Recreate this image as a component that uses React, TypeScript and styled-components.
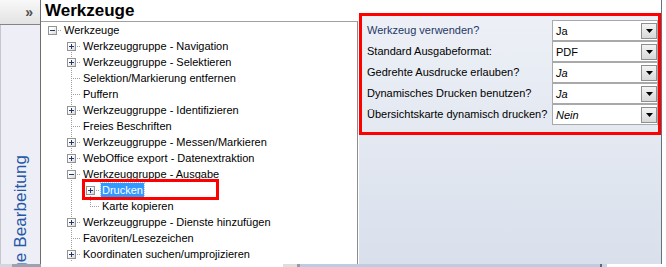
import React from 'react';
import styled, { createGlobalStyle, css } from 'styled-components';

const GlobalStyle = createGlobalStyle`
  html, body {
    margin: 0;
    padding: 0;
    background: #ffffff;
  }
  body {
    width: 666px;
    height: 267px;
    overflow: hidden;
    font-family: "Liberation Sans", Arial, sans-serif;
  }
`;

type Vert = 'none' | 'first' | 'mid' | 'last' | 'pipe';
type Joint = { v: Vert; h: boolean; box?: 'plus' | 'minus' };
type TreeRow = { label: string; cols: Joint[]; selected?: boolean; marked?: boolean };

const J = (v: Vert, box?: 'plus' | 'minus'): Joint => ({ v, h: true, box });
const P: Joint = { v: 'pipe', h: false };
const B: Joint = { v: 'none', h: false };

const treeRows: TreeRow[] = [
  { label: 'Werkzeuge', cols: [J('none', 'minus')] },
  { label: 'Werkzeuggruppe - Navigation', cols: [B, J('first', 'plus')] },
  { label: 'Werkzeuggruppe - Selektieren', cols: [B, J('mid', 'plus')] },
  { label: 'Selektion/Markierung entfernen', cols: [B, J('mid')] },
  { label: 'Puffern', cols: [B, J('mid')] },
  { label: 'Werkzeuggruppe - Identifizieren', cols: [B, J('mid', 'plus')] },
  { label: 'Freies Beschriften', cols: [B, J('mid')] },
  { label: 'Werkzeuggruppe - Messen/Markieren', cols: [B, J('mid', 'plus')] },
  { label: 'WebOffice export - Datenextraktion', cols: [B, J('mid', 'plus')] },
  { label: 'Werkzeuggruppe - Ausgabe', cols: [B, J('mid', 'minus')] },
  { label: 'Drucken', cols: [B, P, J('first', 'plus')], selected: true, marked: true },
  { label: 'Karte kopieren', cols: [B, P, J('last')] },
  { label: 'Werkzeuggruppe - Dienste hinzufügen', cols: [B, J('mid', 'plus')] },
  { label: 'Favoriten/Lesezeichen', cols: [B, J('mid')] },
  { label: 'Koordinaten suchen/umprojizieren', cols: [B, J('mid', 'plus')] },
];

const settings = [
  { label: 'Werkzeug verwenden?', value: 'Ja', italic: false, accent: true },
  { label: 'Standard Ausgabeformat:', value: 'PDF', italic: false, accent: false },
  { label: 'Gedrehte Ausdrucke erlauben?', value: 'Ja', italic: true, accent: false },
  { label: 'Dynamisches Drucken benutzen?', value: 'Ja', italic: true, accent: false },
  { label: 'Übersichtskarte dynamisch drucken?', value: 'Nein', italic: true, accent: false },
];

const strip: [number, string][] = [
  [12, '#d3d7df'],
  [29, '#9aa3b2'],
  [242, '#ffffff'],
  [14, '#dedede'],
  [3, '#9c9c9c'],
  [300, '#bccde3'],
  [2, '#5f6b7a'],
  [5, '#c6d6ea'],
  [59, '#ffffff'],
];

const Screen = styled.div`
  width: 666px;
  height: 267px;
  display: flex;
  flex-direction: column;
  overflow: hidden;
`;

const Main = styled.div`
  display: flex;
  height: 264px;
`;

const Sidebar = styled.div`
  width: 41px;
  flex: none;
  display: flex;
  flex-direction: column;
  border-right: 1px solid #6e6e6e;
  box-sizing: border-box;
`;

const SidebarTop = styled.div`
  height: 25px;
  box-sizing: border-box;
  border-bottom: 1px solid #858585;
  background: linear-gradient(#f8f8f8, #e3e3e3);
  display: flex;
  align-items: center;
  justify-content: flex-end;
  padding: 0 7px 1px 0;
  color: #4e4e4e;
  font-size: 14px;
  font-weight: bold;
`;

const SidebarBody = styled.div`
  flex: 1;
  min-height: 0;
  background: #eeeef6;
  border-left: 1px solid #c6c6ce;
  overflow: hidden;
  padding-top: 130px;
  display: flex;
  align-items: flex-start;
  justify-content: center;
`;

const VerticalTitle = styled.div`
  flex: none;
  writing-mode: vertical-rl;
  transform: rotate(180deg);
  font-size: 17px;
  line-height: 18px;
  letter-spacing: 0.1px;
  color: #2457a6;
  white-space: nowrap;
`;

const LeftColumn = styled.div`
  width: 317px;
  flex: none;
  display: flex;
  flex-direction: column;
`;

const Title = styled.div`
  height: 21px;
  line-height: 21px;
  padding-left: 4px;
  font-size: 17px;
  font-weight: bold;
  color: #000;
`;

const Tree = styled.div`
  flex: 1;
  border-top: 1px solid #a0a0a0;
  border-right: 1px solid #8d8d8d;
  padding-left: 3px;
  overflow: hidden;
`;

const Row = styled.div`
  height: 16px;
  display: flex;
  align-items: center;
`;

const Marked = styled.div`
  position: relative;
  display: flex;
  align-items: center;
  width: 137px;
  height: 16px;
  &::after {
    content: '';
    position: absolute;
    left: 0;
    right: 0;
    top: -3px;
    bottom: -2px;
    border: 3px solid #ff0000;
  }
`;

const dotsV = 'repeating-linear-gradient(to bottom, #a0a0a0 0 1px, transparent 1px 2px)';
const dotsH = 'repeating-linear-gradient(to right, #a0a0a0 0 1px, transparent 1px 2px)';

const jointBg = (v: Vert, h: boolean) => {
  const layers: string[] = [];
  if (v === 'mid' || v === 'pipe') layers.push(`${dotsV} 8px 0 / 1px 16px no-repeat`);
  if (v === 'first') layers.push(`${dotsV} 8px 8px / 1px 8px no-repeat`);
  if (v === 'last') layers.push(`${dotsV} 8px 0 / 1px 9px no-repeat`);
  if (h) layers.push(`${dotsH} 8px 8px / 10px 1px no-repeat`);
  return layers.length ? layers.join(', ') : 'none';
};

const JointCell = styled.div<{ $v: Vert; $h: boolean }>`
  width: 19px;
  height: 16px;
  flex: none;
  display: flex;
  align-items: center;
  padding-left: 4px;
  box-sizing: border-box;
  ${(p) => css`
    background: ${jointBg(p.$v, p.$h)};
  `}
`;

const ExpandBox = styled.span`
  width: 9px;
  height: 9px;
  box-sizing: border-box;
  border: 1px solid #939393;
  background: linear-gradient(135deg, #ffffff 30%, #d6d6d6);
  display: flex;
  margin-top: 1px;
`;

const Label = styled.span<{ $selected?: boolean }>`
  font-size: 11px;
  line-height: 14px;
  padding: 0 1px;
  white-space: nowrap;
  color: ${(p) => (p.$selected ? '#ffffff' : '#000000')};
  background: ${(p) => (p.$selected ? '#3399ff' : 'transparent')};
  outline: ${(p) => (p.$selected ? '1px dotted #9fcaff' : 'none')};
`;

const RightColumn = styled.div`
  width: 304px;
  flex: none;
  box-sizing: border-box;
  border-right: 1px solid #66707e;
  padding: 13px 0 0 1px;
  display: flex;
  flex-direction: column;
`;

const Panel = styled.div`
  flex: 1;
  background: linear-gradient(#edf0f6, #d9e0ec);
`;

const RedFrame = styled.div`
  border: 3px solid #ff0000;
  padding: 4px 0 7px 5px;
  display: grid;
  grid-template-columns: 1fr 106px;
  grid-auto-rows: 21px;
`;

const SettingLabel = styled.div<{ $accent: boolean }>`
  font-size: 11px;
  line-height: 21px;
  white-space: nowrap;
  color: ${(p) => (p.$accent ? '#1f3766' : '#000000')};
`;

const Combo = styled.div`
  box-sizing: border-box;
  border: 1px solid #a9a9a9;
  background: #ffffff;
  display: flex;
  align-items: center;
  padding-left: 3px;
`;

const ComboValue = styled.span<{ $italic: boolean }>`
  flex: 1;
  font-size: 11px;
  font-style: ${(p) => (p.$italic ? 'italic' : 'normal')};
  color: #000;
`;

const ComboButton = styled.span`
  width: 16px;
  height: 16px;
  box-sizing: border-box;
  border: 1px solid #8f8f8f;
  background: linear-gradient(#f4f4f4, #d8d8d8);
  display: flex;
  align-items: center;
  justify-content: center;
`;

const Filler = styled.div`
  flex: 1;
  background: #ffffff;
`;

const Strip = styled.div`
  display: flex;
  height: 3px;
`;

const StripPart = styled.div<{ $w: number; $c: string }>`
  width: ${(p) => p.$w}px;
  background: ${(p) => p.$c};
`;

const Sign = ({ kind }: { kind: 'plus' | 'minus' }) => (
  <svg width="7" height="7" viewBox="0 0 7 7">
    <path d="M1 3.5h5" stroke="#23386b" strokeWidth="1" />
    {kind === 'plus' && <path d="M3.5 1v5" stroke="#23386b" strokeWidth="1" />}
  </svg>
);

const Arrow = () => (
  <svg width="7" height="4" viewBox="0 0 7 4">
    <path d="M0 0h7L3.5 4z" fill="#000" />
  </svg>
);

const TreeLine = ({ row }: { row: TreeRow }) => {
  const cells = row.cols.map((c, i) => (
    <JointCell key={i} $v={c.v} $h={c.h}>
      {c.box && (
        <ExpandBox>
          <Sign kind={c.box} />
        </ExpandBox>
      )}
    </JointCell>
  ));
  const last = cells.pop();
  const label = <Label $selected={row.selected}>{row.label}</Label>;
  return (
    <Row>
      {cells}
      {row.marked ? (
        <Marked>
          {last}
          {label}
        </Marked>
      ) : (
        <>
          {last}
          {label}
        </>
      )}
    </Row>
  );
};

const App = () => {
  return (
    <Screen>
      <GlobalStyle />
      <Main>
        <Sidebar>
          <SidebarTop>»</SidebarTop>
          <SidebarBody>
            <VerticalTitle>Werkzeuge Bearbeitung</VerticalTitle>
          </SidebarBody>
        </Sidebar>
        <LeftColumn>
          <Title>Werkzeuge</Title>
          <Tree>
            {treeRows.map((r) => (
              <TreeLine key={r.label} row={r} />
            ))}
          </Tree>
        </LeftColumn>
        <RightColumn>
          <Panel>
            <RedFrame>
              {settings.map((s) => (
                <React.Fragment key={s.label}>
                  <SettingLabel $accent={s.accent}>{s.label}</SettingLabel>
                  <Combo>
                    <ComboValue $italic={s.italic}>{s.value}</ComboValue>
                    <ComboButton>
                      <Arrow />
                    </ComboButton>
                  </Combo>
                </React.Fragment>
              ))}
            </RedFrame>
          </Panel>
        </RightColumn>
        <Filler />
      </Main>
      <Strip>
        {strip.map(([w, c], i) => (
          <StripPart key={i} $w={w} $c={c} />
        ))}
      </Strip>
    </Screen>
  );
};

export default App;
